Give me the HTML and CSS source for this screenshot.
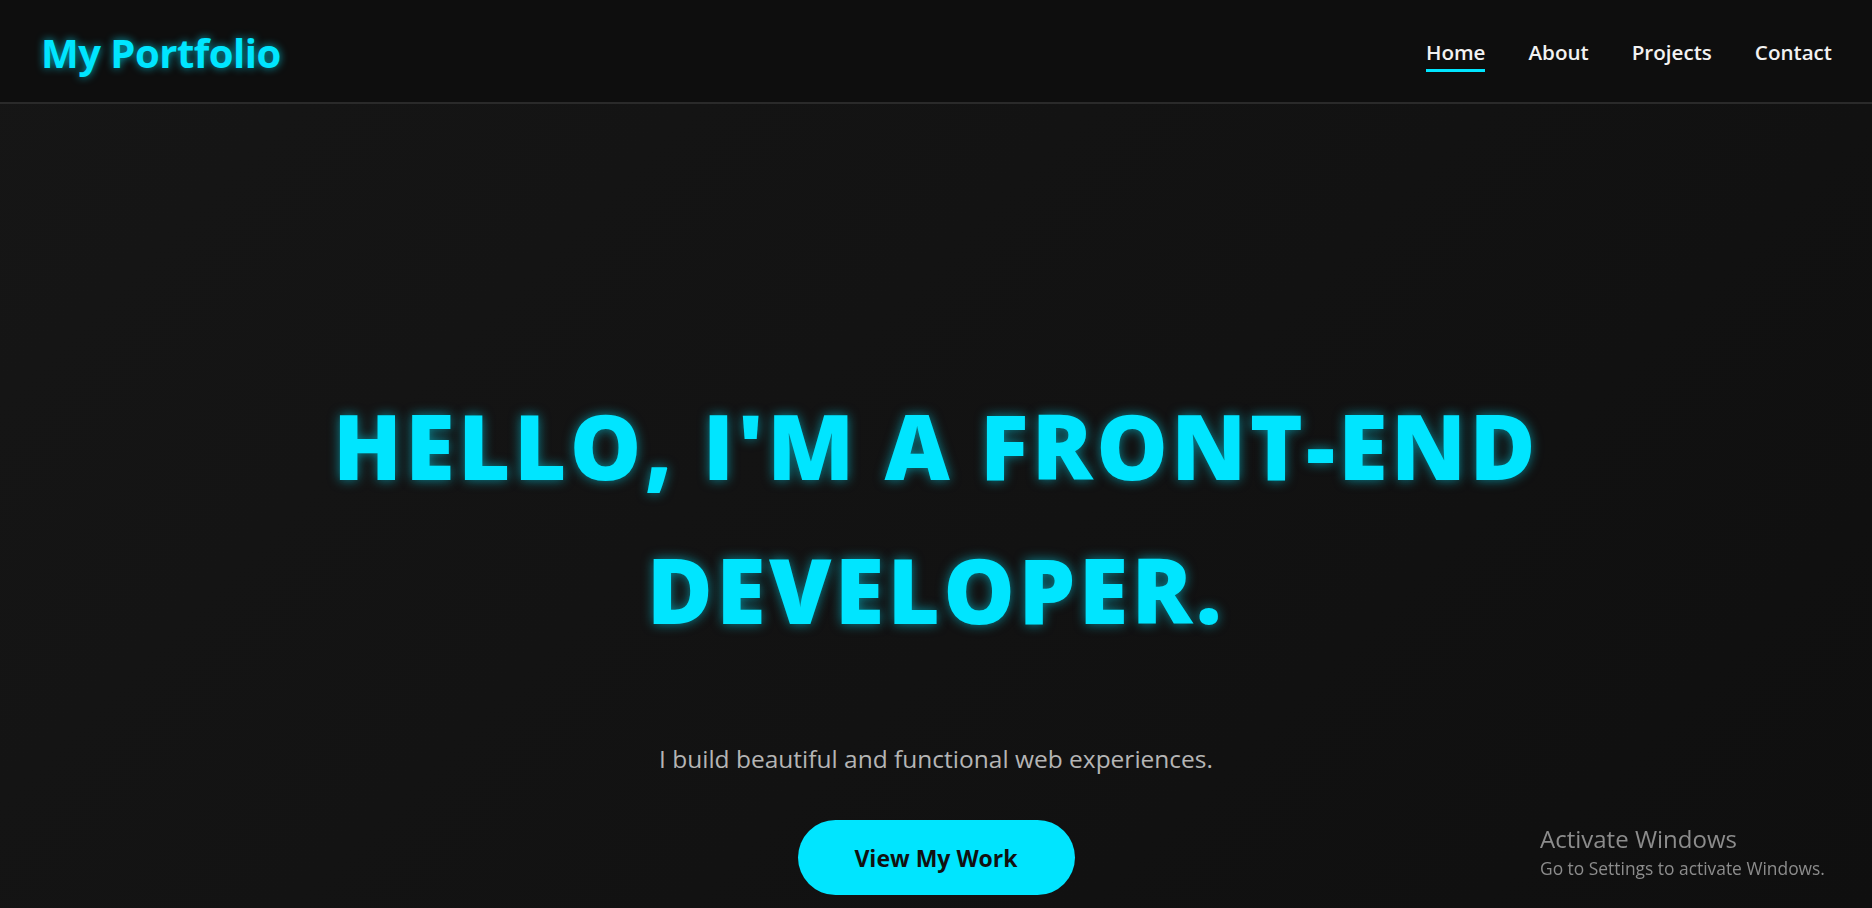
FILE: index.html
```html
<!DOCTYPE html>
<html lang="en">
<head>
<meta charset="utf-8">
<title>My Portfolio</title>
<link rel="stylesheet" href="styles.css">
</head>
<body>
<header class="nav">
  <a class="logo" href="#">My Portfolio</a>
  <nav class="links">
    <a class="link active" href="#">Home</a>
    <a class="link" href="#">About</a>
    <a class="link" href="#">Projects</a>
    <a class="link" href="#">Contact</a>
  </nav>
</header>
<main class="hero">
  <h1 class="title">HELLO, I'M A FRONT-END DEVELOPER.</h1>
  <p class="subtitle">I build beautiful and functional web experiences.</p>
  <a class="cta" href="#">View My Work</a>
</main>
<div class="watermark">
  <div class="wm-title">Activate Windows</div>
  <div class="wm-sub">Go to Settings to activate Windows.</div>
</div>
</body>
</html>
```
FILE: styles.css
```css
* { box-sizing: border-box; }
html, body { margin: 0; padding: 0; }
body {
  font-family: "Open Sans", "Noto Sans", sans-serif;
  background: linear-gradient(135deg, #161616 0%, #0f0f0f 100%);
  color: #f0f0f0;
  height: 908px;
  overflow: hidden;
}
a { text-decoration: none; }
.nav {
  height: 104px;
  display: flex;
  align-items: center;
  justify-content: space-between;
  padding: 0 40px 0 41px;
  background: #0e0e0e;
  border-bottom: 2px solid #2a2a2a;
}
.logo {
  font-size: 40px;
  font-weight: 700;
  color: #00e5ff;
  text-shadow: 0 0 8px rgba(0, 229, 255, 0.7);
  letter-spacing: -0.5px;
  margin-top: 2px;
}
.links {
  display: flex;
  gap: 43px;
  margin-top: 8px;
}
.link {
  font-size: 20.6px;
  font-weight: 600;
  color: #f2f2f2;
  padding-bottom: 3px;
  border-bottom: 3px solid transparent;
  line-height: 28px;
}
.link.active { border-bottom-color: #00e5ff; }
.hero {
  display: flex;
  flex-direction: column;
  align-items: center;
  text-align: center;
  padding-top: 269px;
}
.title {
  margin: 0;
  font-size: 90px;
  font-weight: 800;
  line-height: 144px;
  letter-spacing: 3.4px;
  color: #00e5ff;
  text-shadow: 0 0 12px rgba(0, 229, 255, 0.55);
  max-width: 1300px;
}
.subtitle {
  margin: 80px 0 0;
  font-size: 24.5px;
  font-weight: 400;
  line-height: 36px;
  color: #b5b5b5;
}
.cta {
  margin-top: 43px;
  display: inline-flex;
  align-items: center;
  justify-content: center;
  width: 277px;
  height: 75px;
  border-radius: 38px;
  background: #00e5ff;
  color: #111;
  font-size: 23px;
  font-weight: 700;
}
.watermark {
  position: fixed;
  left: 1540px;
  top: 823px;
  color: #8c8c8c;
}
.wm-title { font-size: 24px; line-height: 32px; }
.wm-sub { font-size: 17.4px; line-height: 26px; }
```
